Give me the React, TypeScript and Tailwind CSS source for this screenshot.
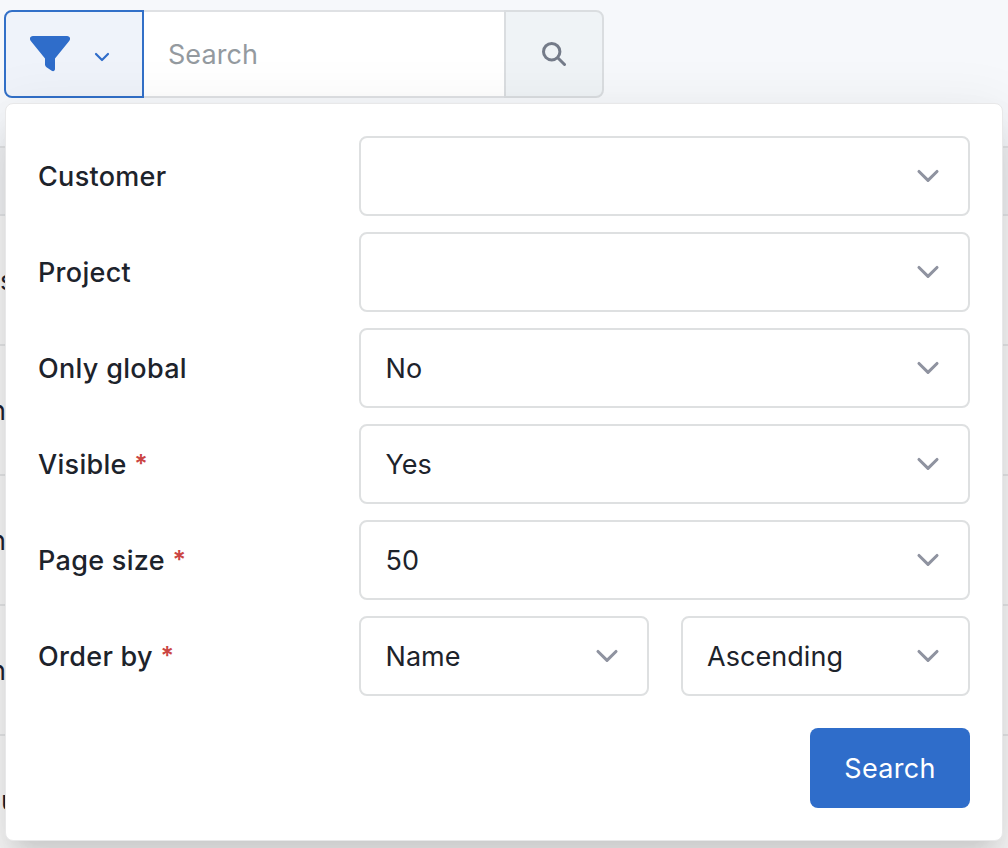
import React from "react";

const rows = [
  { text: "s", shift: "ml-0" },
  { text: "n", shift: "-ml-[10px]" },
  { text: "n", shift: "-ml-[10px]" },
  { text: "n", shift: "-ml-[10px]" },
  { text: "u", shift: "ml-px" },
];

function Chevron() {
  return (
    <svg className="h-8 w-8 shrink-0" viewBox="0 0 32 32" fill="none" stroke="#8f93a0" strokeWidth="3.100" strokeLinecap="round" strokeLinejoin="round">
      <path d="M7 11.500l9 8.800 9-8.800" />
    </svg>
  );
}

function Select({ value = "" }: { value?: string }) {
  return (
    <button className="flex h-20 min-w-0 flex-1 items-center justify-between rounded-lg border-2 border-[#dee0e1] bg-white pr-6 pl-[24.5px] text-[#1d232b]">
      <span className="pt-0.5">{value}</span>
      <Chevron />
    </button>
  );
}

function Field({ label, required, children }: { label: string; required?: boolean; children: React.ReactNode }) {
  return (
    <div className="flex h-20 items-center">
      <label className="w-[321px] shrink-0 pt-0.5 font-medium tracking-[0.3px] text-[#1d232b]">
        {label}
        {required && <span className="relative -top-px ml-[7.5px] text-[25px] leading-none font-semibold text-[#cb4543]">*</span>}
      </label>
      <div className="flex flex-1 gap-8">{children}</div>
    </div>
  );
}

export default function App() {
  return (
    <div className="relative h-[848px] w-[1008px] overflow-hidden bg-[#f6f8fb] font-['Inter','Liberation_Sans',sans-serif] text-[27px] leading-10 tracking-[0.05px]">
      <div className="flex h-[98px] pt-[10px] pl-1">
        <button className="flex w-[140px] items-center rounded-l-lg border-2 border-[#3270c8] bg-[#eff3fa] text-[#2f6dca]">
          <svg className="ml-6 h-9 w-10" viewBox="0 0 40 36" fill="currentColor">
            <path d="M3 0h34c3 0 4 3 2 5.200L25 22.500V33c0 2-1.800 2.700-3.300 1.800l-5.200-3.500Q15 30.300 15 28.500v-6L1 5.200C-1 3 0 0 3 0Z" />
          </svg>
          <svg className="mt-1.5 ml-6 h-4 w-4" viewBox="0 0 16 16" fill="none" stroke="currentColor" strokeWidth="2.200" strokeLinecap="round" strokeLinejoin="round">
            <path d="M2 5l6 6 6-6" />
          </svg>
        </button>
        <div className="flex w-[360px] items-center border-y-2 border-[#dfe1e4] bg-white pt-0.5 pl-6 text-[#949a9f]">Search</div>
        <button className="flex w-[100px] items-center justify-center rounded-r-lg border-2 border-[#dadde0] bg-[#eff3f6] text-[#747b89]">
          <svg className="h-6 w-6" viewBox="0 0 24 24" fill="none" stroke="currentColor" strokeWidth="3" strokeLinecap="round">
            <circle cx="9.700" cy="9.700" r="8.200" />
            <path d="M16 16l6.500 6.500" />
          </svg>
        </button>
      </div>

      <div className="pt-12">
        <div className="h-[70px] border-y-2 border-[#e2e4e6] bg-[#f1f2f4]" />
        {rows.map((row, i) => (
          <div key={i} className="flex h-[130px] items-center border-b-2 border-[#e4e5e6] bg-[#f8f8f8] pt-0.5 text-[#1d2330]">
            <span className={row.shift}>{row.text}</span>
          </div>
        ))}
      </div>

      <div className="absolute top-[103px] left-[5px] w-[998px] rounded-lg border border-[#e8e8e9] bg-white px-8 pt-8 pb-8 shadow-[0_32px_48px_4px_rgba(0,0,0,0.07),0_12px_60px_10px_rgba(0,0,0,0.06),0_16px_20px_-10px_rgba(0,0,0,0.1)]">
        <div className="flex flex-col gap-4">
          <Field label="Customer"><Select /></Field>
          <Field label="Project"><Select /></Field>
          <Field label="Only global"><Select value="No" /></Field>
          <Field label="Visible" required><Select value="Yes" /></Field>
          <Field label="Page size" required><Select value="50" /></Field>
          <Field label="Order by" required>
            <Select value="Name" />
            <Select value="Ascending" />
          </Field>
        </div>
        <div className="mt-8 flex justify-end">
          <button className="h-20 w-40 rounded-lg bg-[#2f6dca] pt-0.5 tracking-[0.3px] text-white">Search</button>
        </div>
      </div>
    </div>
  );
}
